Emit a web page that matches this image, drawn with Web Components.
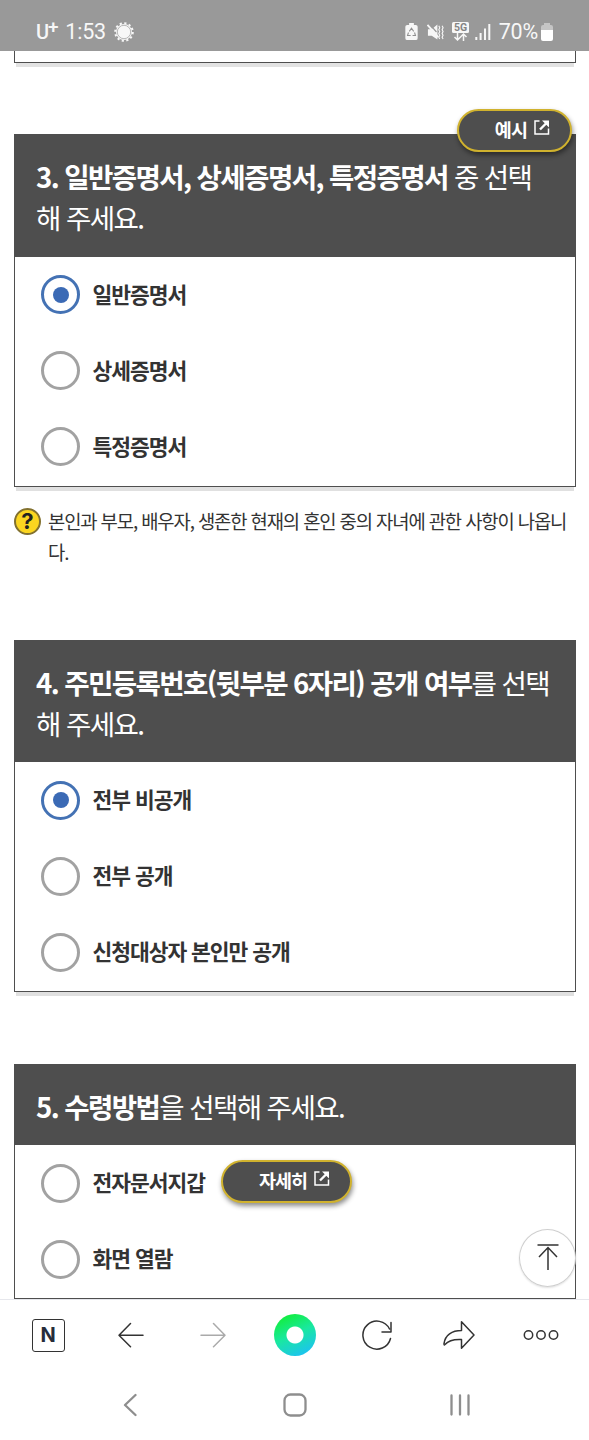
<!DOCTYPE html>
<html lang="ko">
<head>
<meta charset="UTF-8">
<meta name="viewport" content="width=device-width, initial-scale=1.0">
<title>증명서 신청</title>
<style>
    html, body {
        height: 100%;
    }

    body {
        --charcoal: #4e4e4e;
        --gold: #d0b22e;
        margin: 0;
        display: flex;
        flex-direction: column;
        height: 1440px;
        overflow: hidden;
        background: #fff;
        color: #333;
        font-family: "Noto Sans CJK KR", "Noto Sans", sans-serif;
    }

    main {
        position: relative;
        flex: 1;
        min-height: 0;
        overflow: hidden;
        padding: 0 13px 0 14px;
        display: flex;
        flex-direction: column;
    }
</style>
</head>
<body>
    <status-bar></status-bar>

    <main>
        <card-tail></card-tail>

        <question-card style="--gap: 71px">
            <pill-button slot="badge">예시</pill-button>
            <span slot="title"><b>3. 일반증명서, 상세증명서, 특정증명서</b> 중 선택<br>해 주세요.</span>
            <radio-option checked>일반증명서</radio-option>
            <radio-option>상세증명서</radio-option>
            <radio-option>특정증명서</radio-option>
        </question-card>
        <help-note>본인과 부모, 배우자, 생존한 현재의 혼인 중의 자녀에 관한 사항이 나옵니<br>다.</help-note>

        <question-card style="--gap: 73px">
            <span slot="title"><b>4. 주민등록번호(뒷부분 6자리) 공개 여부</b>를 선택<br>해 주세요.</span>
            <radio-option checked>전부 비공개</radio-option>
            <radio-option>전부 공개</radio-option>
            <radio-option>신청대상자 본인만 공개</radio-option>
        </question-card>

        <question-card style="--gap: 72px">
            <span slot="title"><b>5. 수령방법</b>을 선택해 주세요.</span>
            <radio-option>전자문서지갑<pill-button slot="extra">자세히</pill-button></radio-option>
            <radio-option>화면 열람</radio-option>
        </question-card>

        <top-button></top-button>
    </main>

    <browser-toolbar></browser-toolbar>
    <system-nav></system-nav>

<script>
/* Phone status bar: carrier, clock, indicators */
class StatusBar extends HTMLElement {
    constructor() {
        super();
        this.attachShadow({ mode: 'open' });
        this.shadowRoot.innerHTML = `
<style>
    :host {
        display: flex;
        justify-content: space-between;
        align-items: center;
        box-sizing: border-box;
        height: 51px;
        flex: none;
        padding: 12px 36px 0 36px;
        background: #999;
        color: #f7f7f7;
        font-family: Roboto, sans-serif;
        font-size: 21.5px;
        letter-spacing: -0.2px;
    }
    div {
        display: flex;
        align-items: center;
    }
    svg {
        display: block;
        margin-top: 1px;
    }
    .carrier {
        font-size: 20px;
        font-weight: 500;
        margin-right: 7px;
        display: flex;
    }
    .carrier sup {
        font-size: 19px;
        line-height: 13px;
        margin-left: -1px;
    }
    .sun { margin-left: 8px; }
    .mute { margin-left: 9px; }
    .net { margin: 0 0 0 8px; }
    .signal { margin: 0 8px 0 6px; }
    .battery { margin-left: 3px; }
</style>
<div>
    <span class="carrier">U<sup>+</sup></span>
    <span>1:53</span>
    <svg class="sun" width="20" height="20" viewBox="0 0 20 20" fill="none" stroke="#f7f7f7">
        <circle cx="10" cy="10" r="8" fill="#f7f7f7" stroke="none"/>
        <circle cx="10" cy="10" r="8.800" stroke-width="2" stroke-dasharray="2.200 2.407"/>
        <circle cx="10" cy="10" r="6.700" stroke="#999" stroke-width=".700"/>
    </svg>
</div>
<div>
    <svg width="13" height="18" viewBox="0 0 13 19">
        <path d="M4 0h5v2h2q2 0 2 2v12q0 2-2 2H2q-2 0-2-2V4q0-2 2-2h2z" fill="#f7f7f7"/>
        <path d="M4.200 8.800L6.500 5.500l2.300 3.300M9.700 10l1 3.200H7.600M5.600 13.200H2.300l1-3.200" fill="none" stroke="#909090" stroke-width="1.100"/>
    </svg>
    <svg class="mute" width="17" height="18" viewBox="0 0 18 18" fill="none" stroke="#f7f7f7">
        <path d="M1 6h4l6-5v16l-6-4H1z" fill="#f7f7f7" stroke="none"/>
        <path d="M3 1L10 9" stroke="#999" stroke-width="1.300"/>
        <path d="M.500 1.500L12 14.500" stroke-width="2"/>
        <path d="M12.500 2.500l1 2-1 2 1 2-1 2 1 2-1 2 1 2M16 2.500l1 2-1 2 1 2-1 2 1 2-1 2 1 2" stroke-width="1.200"/>
    </svg>
    <svg class="net" width="17" height="19" viewBox="0 0 17 19">
        <rect width="17" height="11" rx="1.500" fill="#f7f7f7"/>
        <text x="8.500" y="9.300" text-anchor="middle" font-family="Roboto" font-weight="700" font-size="10.500" letter-spacing="0" fill="#858585">5G</text>
        <path d="M5.500 11v7M2.500 15l3 3 3-3M11.500 19v-7M8.500 15l3-3 3 3" fill="none" stroke="#f7f7f7" stroke-width="1.500"/>
    </svg>
    <svg class="signal" width="16" height="18" viewBox="0 0 16 18" stroke="#f7f7f7" stroke-width="2">
        <path d="M1.300 14v3M5.600 10v7M10 5.500V17M14.300 1v16"/>
    </svg>
    <span>70%</span>
    <svg class="battery" width="12" height="18" viewBox="0 0 12 18">
        <path d="M3 0h6v2h1q2 0 2 2v4H0V4q0-2 2-2h1z" fill="#c5c5c5"/>
        <path d="M0 7h12v9q0 2-2 2H2q-2 0-2-2z" fill="#fff"/>
    </svg>
</div>`;
    }
}

/* Bottom edge of the card that is scrolled out under the status bar */
class CardTail extends HTMLElement {
    constructor() {
        super();
        this.attachShadow({ mode: 'open' });
        this.shadowRoot.innerHTML = `
<style>
    :host {
        display: block;
        flex: none;
        box-sizing: border-box;
        height: 12px;
        border: 1px solid var(--charcoal);
        border-top: 0;
        box-shadow: 0 6px 0 -2px #e2e2e2;
    }
</style>`;
    }
}

class QuestionCard extends HTMLElement {
    constructor() {
        super();
        this.attachShadow({ mode: 'open' });
        this.shadowRoot.innerHTML = `
<style>
    :host {
        display: block;
        position: relative;
        flex: none;
        margin-top: var(--gap, 72px);
        box-shadow: 0 6px 0 -2px #e0e0e0;
    }
    header {
        padding: 22px 20px 18px 22px;
        background: var(--charcoal);
        color: #fff;
        font-size: 27.600px;
        letter-spacing: -1.610px;
        line-height: 41.300px;
        white-space: nowrap;
    }
    .options {
        padding-bottom: 1px;
        background: #fff;
        border: 1px solid var(--charcoal);
        border-top: 0;
    }
    /* the badge hangs over the card's top right corner */
    .badge {
        position: absolute;
        top: -25px;
        right: 4px;
        line-height: 0;
    }
</style>
<header><slot name="title"></slot></header>
<div class="options"><slot></slot></div>
<div class="badge"><slot name="badge"></slot></div>`;
    }
}

class RadioOption extends HTMLElement {
    constructor() {
        super();
        this.attachShadow({ mode: 'open' });
        this.shadowRoot.innerHTML = `
<style>
    :host {
        display: flex;
        align-items: center;
        height: 76px;
        padding-left: 26px;
        font-size: 21.500px;
        font-weight: 700;
        letter-spacing: -1.050px;
        line-height: 32px;
        white-space: nowrap;
    }
    .ring {
        box-sizing: border-box;
        width: 39px;
        height: 39px;
        flex: none;
        display: grid;
        place-items: center;
        margin-right: 12.500px;
        border: 3px solid #a2a2a2;
        border-radius: 50%;
    }
    :host([checked]) .ring {
        border-color: #4472b4;
    }
    :host([checked]) .ring::after {
        content: "";
        width: 16px;
        height: 16px;
        border-radius: 50%;
        background: #3b6ab5;
    }
    .label {
        padding-bottom: 2px;
    }
    ::slotted(pill-button) {
        margin: -3px 0 0 16px;
    }
</style>
<span class="ring"></span>
<span class="label"><slot></slot></span>
<slot name="extra"></slot>`;
    }
}

class PillButton extends HTMLElement {
    constructor() {
        super();
        this.attachShadow({ mode: 'open' });
        this.shadowRoot.innerHTML = `
<style>
    :host {
        display: inline-flex;
        box-sizing: border-box;
        height: 43px;
        padding: 0 20px 3px 36px;
        border: 2px solid var(--gold);
        border-radius: 22px;
        background: var(--charcoal);
        box-shadow: 1px 3px 5px rgba(0, 0, 0, .45);
        color: #fff;
        align-items: center;
        font-size: 18.500px;
        font-weight: 700;
        letter-spacing: -.950px;
        line-height: 28px;
        white-space: nowrap;
    }
    svg {
        margin: -4px 0 0 7px;
    }
</style>
<slot></slot>
<svg width="16" height="15" viewBox="0 0 16 15" fill="none" stroke="#fff" stroke-width="1.500">
    <path d="M5.500 1H1v13h13.500V8.500"/>
    <path d="M6 9.500l6.500-6.500" stroke-width="2.400"/>
    <path d="M8 .500h7v7z" fill="#fff" stroke="none"/>
</svg>`;
    }
}

class HelpNote extends HTMLElement {
    constructor() {
        super();
        this.attachShadow({ mode: 'open' });
        this.shadowRoot.innerHTML = `
<style>
    :host {
        display: flex;
        gap: 7px;
        flex: none;
        margin-top: 18px;
        font-size: 18.800px;
        letter-spacing: -1.120px;
        line-height: 31px;
        white-space: nowrap;
    }
    i {
        box-sizing: border-box;
        width: 27px;
        height: 27px;
        flex: none;
        margin-top: 3px;
        border: 2px solid #82712f;
        border-radius: 50%;
        background: #fbd520;
        color: #222;
        font: 700 22px/23px Inter, sans-serif;
        text-align: center;
        letter-spacing: 0;
    }
</style>
<i>?</i>
<span><slot></slot></span>`;
    }
}

/* Floating scroll-to-top control */
class TopButton extends HTMLElement {
    constructor() {
        super();
        this.attachShadow({ mode: 'open' });
        this.shadowRoot.innerHTML = `
<style>
    :host {
        position: absolute;
        right: 13px;
        bottom: 12px;
        box-sizing: border-box;
        width: 57px;
        height: 58px;
        display: grid;
        place-items: center;
        border: 1px solid #cfcfcf;
        border-radius: 50%;
        background: rgba(255, 255, 255, .97);
        box-shadow: 0 1px 2px rgba(0, 0, 0, .12);
    }
    svg {
        margin-top: -2px;
    }
</style>
<svg width="22" height="28" viewBox="0 0 22 28" fill="none" stroke="#333" stroke-width="1.500">
    <path d="M.500 2h21M11 27V5M2 14l9-9.500 9 9.500"/>
</svg>`;
    }
}

class BrowserToolbar extends HTMLElement {
    constructor() {
        super();
        this.attachShadow({ mode: 'open' });
        this.shadowRoot.innerHTML = `
<style>
    :host {
        display: grid;
        grid-template-columns: repeat(7, 1fr);
        place-items: center;
        box-sizing: border-box;
        flex: none;
        height: 73px;
        padding: 0 7px 2px;
        border-top: 1px solid #e6e7ec;
        background: #fff;
    }
    .naver {
        box-sizing: border-box;
        width: 33px;
        height: 33px;
        border: 1.500px solid #333;
        border-radius: 3px;
        font: 700 20px/31px Inter, sans-serif;
        color: #272c3a;
        text-align: center;
        letter-spacing: 0;
    }
    .dot {
        box-sizing: border-box;
        width: 42px;
        height: 42px;
        margin-left: 2px;
        border-radius: 50%;
        background: radial-gradient(circle, #fff 8px, transparent 9px),
                    linear-gradient(155deg, #12ee3c 10%, #19e8a0 48%, #1cc4ee 88%);
    }
    svg {
        fill: none;
        stroke: #333;
        stroke-width: 1.500;
        stroke-linecap: round;
        stroke-linejoin: round;
    }
    .arrow {
        margin-left: 2px;
    }
    .off {
        stroke: #aaa;
    }
</style>
<span class="naver">N</span>
<svg class="arrow" width="26" height="26" viewBox="0 0 26 26"><path d="M25 13.300H1M12.500 1.500L1 13.300l11.500 11.500"/></svg>
<svg class="arrow off" width="26" height="26" viewBox="0 0 26 26"><path d="M1 13.300h24M13.500 1.500L25 13.300 13.500 24.800"/></svg>
<span class="dot"></span>
<svg width="30" height="30" viewBox="0 0 30 30"><path d="M28.500 18.500A14 14 0 1 1 27.500 9M29 2.500V12h-9"/></svg>
<svg width="32" height="28" viewBox="0 0 32 28"><path d="M18.500.800L31 14 18.500 27.200V18.500C9 18 5 20 2 23.500q-1 1-1-.800C2 14 9 9.500 18.500 9.500z"/></svg>
<svg width="36" height="12" viewBox="0 0 36 12"><circle cx="5.500" cy="6" r="4.200"/><circle cx="18" cy="6" r="4.200"/><circle cx="30.500" cy="6" r="4.200"/></svg>`;
    }
}

class SystemNav extends HTMLElement {
    constructor() {
        super();
        this.attachShadow({ mode: 'open' });
        this.shadowRoot.innerHTML = `
<style>
    :host {
        display: grid;
        grid-template-columns: repeat(3, 1fr);
        place-items: center;
        box-sizing: border-box;
        flex: none;
        height: 68px;
        padding: 0 47px 2px 48px;
        background: #fff;
    }
    svg {
        fill: none;
        stroke: #8e8e8e;
        stroke-width: 2.300;
        stroke-linecap: round;
        stroke-linejoin: round;
    }
</style>
<svg width="14" height="24" viewBox="0 0 14 24"><path d="M12.500 2L2 12l10.500 10"/></svg>
<svg width="24" height="24" viewBox="0 0 24 24"><rect x="1.500" y="1.500" width="21" height="21" rx="6"/></svg>
<svg width="22" height="24" viewBox="0 0 22 24"><path d="M2.500 2.500v19M11 2.500v19M19.500 2.500v19"/></svg>`;
    }
}

customElements.define('status-bar', StatusBar);
customElements.define('card-tail', CardTail);
customElements.define('question-card', QuestionCard);
customElements.define('radio-option', RadioOption);
customElements.define('pill-button', PillButton);
customElements.define('help-note', HelpNote);
customElements.define('top-button', TopButton);
customElements.define('browser-toolbar', BrowserToolbar);
customElements.define('system-nav', SystemNav);
</script>
</body>
</html>
